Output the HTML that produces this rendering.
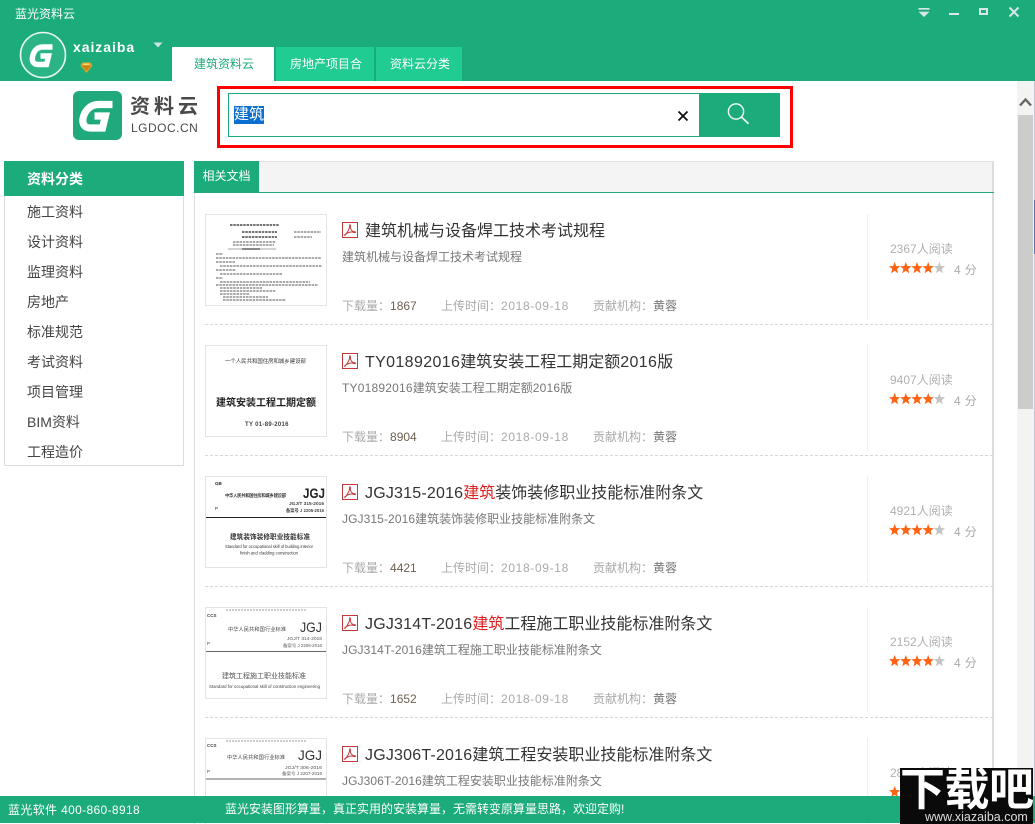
<!DOCTYPE html>
<html lang="zh-CN">
<head>
<meta charset="utf-8">
<title>蓝光资料云</title>
<style>
html,body{margin:0;padding:0;background:#fff;width:1035px;height:824px;overflow:hidden}
#wrap{left:0;top:0;width:1035px;height:824px;overflow:hidden;font-family:"Liberation Sans","Noto Sans CJK SC",sans-serif;color:#333;background:#fff}
div,svg{position:absolute;display:block}
.t{white-space:nowrap}
svg text{font-family:"Liberation Sans","Noto Sans CJK SC",sans-serif}
.tab{top:47px;height:34px;line-height:34px;text-align:center;text-indent:2px;font-size:12px;background:#21cc93;color:#fff}
.side{left:27px;font-size:14px;line-height:20px;color:#444;white-space:nowrap}
.row{left:205px;width:789px;height:111px}
.thumb{left:0;top:0;width:120px;height:90px;border:1px solid #e4e4e4;background:#fff;overflow:hidden}
.thumb svg{filter:blur(.35px)}
.pdf{left:137px;top:8px}
.title{left:160px;top:7px;font-size:16px;line-height:22px;color:#333;white-space:nowrap}
.title b{font-weight:normal;color:#e02020}
.title i{font-style:normal;letter-spacing:.2px}
.title i.w{letter-spacing:.36px}
.sub{left:137px;top:34px;font-size:12px;line-height:18px;color:#777;white-space:nowrap}
.sub i{font-style:normal;letter-spacing:.1px}
.sub i.w{letter-spacing:.2px}
.m{top:83px;font-size:12px;line-height:18px;color:#aaa;white-space:nowrap}
.m b{font-weight:normal}
.num{color:#6d6050}
.date{color:#aaa;letter-spacing:.65px}
.org{color:#777}
.vl{left:662px;top:0;width:1px;height:106px;background:#f0f0f0}
.dash{left:0;top:110px;width:788px;height:0;border-top:1px dashed #d8d8d8}
.read{left:685px;top:26px;font-size:12px;line-height:18px;color:#b0b0b0;white-space:nowrap}
.star{left:684px;top:48px}
.score{left:749px;top:47px;font-size:12px;line-height:18px;color:#aaa;letter-spacing:.4px;white-space:nowrap}
</style>
</head>
<body>
<div id="wrap">
<svg width="0" height="0" style="left:0;top:0">
<defs>
<polygon id="s" points="5.6,0 7.1,4 11.2,4.3 8,7 9.1,11.2 5.6,8.9 2.1,11.2 3.2,7 0,4.3 4.1,4"/>
<g id="st"><use href="#s" fill="#ff6414"/><use href="#s" x="11.2" fill="#ff6414"/><use href="#s" x="22.4" fill="#ff6414"/><use href="#s" x="33.6" fill="#ff6414"/><use href="#s" x="44.8" fill="#c4c4c4"/></g>
<g id="pd"><rect x=".5" y=".5" width="15" height="15" fill="#fff" stroke="#c0393b"/><path d="M2.5 13.2C4.5 12 6.6 8.6 7.4 5.8 7.8 4.4 7.6 2.8 7.9 2.6 8.4 2.6 8.6 4.2 8.3 5.6 8.8 7.6 10 9 11.4 9.6 12.4 9.6 13.6 9.7 13.5 10.3 13.3 10.9 11.5 10.5 10.4 9.9 8.5 9.9 6.4 10.4 4.6 11.4 3.8 12.4 3 13.6 2.5 13.2Z" fill="none" stroke="#c0393b" stroke-width="1"/></g>
</defs>
</svg>

<div style="left:0;top:0;width:1035px;height:81px;background:#1cab7b"></div>
<div class="t" style="left:15px;top:5px;font-size:12px;line-height:18px;color:#fff">蓝光资料云</div>

<svg style="left:918px;top:7px" width="12" height="11"><path d="M.5 1H11.5V2.6H.5ZM.5 4.8H11.5L6 10Z" fill="#dbe6ea"/></svg>
<div style="left:949px;top:13px;width:10px;height:2px;background:#dbe6ea"></div>
<div style="left:979px;top:8px;width:5px;height:3px;border:2px solid #dbe6ea"></div>
<svg style="left:1008px;top:6px" width="12" height="12"><path d="M1.5 1.5L10.5 10.5M10.5 1.5L1.5 10.5" stroke="#dbe6ea" stroke-width="2"/></svg>

<svg style="left:19px;top:31px" width="48" height="48">
<circle cx="24" cy="24" r="22.5" fill="#2bb587" stroke="#e6f6f0" stroke-width="1.6"/>
<path d="M33.5 16H23.5C17.5 16 14.2 21 13.4 26.5 12.8 31 15 33.5 19 33.5H27.5L29.6 25H21.5" fill="none" stroke="#fff" stroke-width="5.4"/>
</svg>
<div class="t" style="left:73px;top:37px;font-size:14px;line-height:20px;font-weight:bold;color:#fff;letter-spacing:.95px">xaizaiba</div>
<svg style="left:153px;top:42px" width="10" height="6"><path d="M0.5 .5H9.5L5 5.5Z" fill="#cfe3e6"/></svg>
<svg style="left:80px;top:62px" width="13" height="12"><path d="M2.5 .5H10.5L12.5 3.5 6.5 11 .5 3.5Z" fill="#e0a526"/><path d="M1.5 3.5H11.5L6.5 9Z" fill="#c9821c"/><path d="M3.5 1.5H9L9.5 3H3Z" fill="#f6d774"/></svg>

<div class="tab" style="left:172px;width:102px;background:#fff;color:#1fa97b">建筑资料云</div>
<div class="tab" style="left:276px;width:98px">房地产项目合</div>
<div class="tab" style="left:376px;width:86px">资料云分类</div>

<svg style="left:73px;top:91px" width="49" height="49">
<rect width="49" height="49" rx="6" fill="#1fa97c"/>
<path d="M39.5 13.5H25.5C17 13.5 11.5 20 10 27.5 9 33.5 12 37 17.5 37H29.5L32.4 25H21.5" fill="none" stroke="#fff" stroke-width="7.2"/>
</svg>
<div class="t" style="left:130px;top:93px;font-size:20px;line-height:28px;font-weight:bold;color:#4a4a4a;letter-spacing:4px">资料云</div>
<div class="t" style="left:131px;top:120px;font-size:12px;line-height:16px;color:#4a4a4a;letter-spacing:.5px">LGDOC.CN</div>

<div style="left:217px;top:86px;width:570px;height:56px;border:3px solid #f00"></div>
<div style="left:228px;top:93px;width:470px;height:42px;border:1px solid #1cab7b;border-right:0"></div>
<div class="t" style="left:234px;top:106px;width:30px;height:18px;background:#0a6fd1;color:#fff;font-size:15px;line-height:17px">建筑</div>
<svg style="left:677px;top:110px" width="12" height="12"><path d="M1.5 1.5L10.5 10.5M10.5 1.5L1.5 10.5" stroke="#111" stroke-width="1.8"/></svg>
<div style="left:699px;top:93px;width:81px;height:44px;background:#1cab7b"></div>
<svg style="left:726px;top:102px" width="26" height="24"><circle cx="10" cy="9.5" r="7.6" fill="none" stroke="#e8f7f2" stroke-width="1.5"/><path d="M15.4 15L22.6 21.8" stroke="#e8f7f2" stroke-width="1.7"/></svg>

<div style="left:4px;top:196px;width:178px;height:269px;border:1px solid #ddd;border-top:0"></div>
<div class="t" style="left:4px;top:161px;width:180px;height:35px;background:#1cab7b;color:#fff;font-size:14px;font-weight:bold;line-height:36px;text-indent:23px">资料分类</div>
<div class="side" style="top:202px">施工资料</div>
<div class="side" style="top:232px">设计资料</div>
<div class="side" style="top:262px">监理资料</div>
<div class="side" style="top:292px">房地产</div>
<div class="side" style="top:322px">标准规范</div>
<div class="side" style="top:352px">考试资料</div>
<div class="side" style="top:382px">项目管理</div>
<div class="side" style="top:412px">BIM资料</div>
<div class="side" style="top:442px">工程造价</div>

<div style="left:194px;top:161px;width:797px;height:663px;border-left:1px solid #ddd;border-right:2px solid #ddd"></div>
<div style="left:194px;top:161px;width:798px;height:31px;background:#f4f4f4;border-top:1px solid #e0e0e0;box-sizing:border-box"></div>
<div style="left:194px;top:192px;width:800px;height:1px;background:#1cab7b"></div>
<div class="t" style="left:194px;top:161px;width:65px;height:32px;background:#1cab7b;color:#fff;font-size:12px;line-height:31px;text-align:center">相关文档</div>

<div class="row" style="top:214px">
<div class="thumb"><svg width="120" height="90" style="left:0;top:0">
<g fill="none" stroke="#555" stroke-width=".9" stroke-dasharray="2.5 .8">
<path d="M24 10H73" stroke="#222" stroke-width="1.2"/>
<path d="M36 17H71M36 22H71" stroke="#222" stroke-width="1.2"/>
<path d="M88 17H115M88 22H106"/>
<path d="M27 27H70M27 30H68"/>
<path d="M10 39H17M10 43H115M10 47H29M14 51H116M10 55H30M14 59H76M10 63H17"/>
<path d="M14 67H104M10 70H112M14 73H56M14 76H70M14 79H44M17 82H62M17 85H80"/>
</g>
<path d="M22 34H70" stroke="#888" stroke-width=".8"/><path d="M36 34H54" stroke="#111" stroke-width="1"/>
</svg></div>
<svg class="pdf" width="16" height="16"><use href="#pd"/></svg>
<div class="title">建筑机械与设备焊工技术考试规程</div>
<div class="sub">建筑机械与设备焊工技术考试规程</div>
<div class="m" style="left:137px">下载量：<b class="num">1867</b></div>
<div class="m" style="left:236px">上传时间：<b class="date">2018-09-18</b></div>
<div class="m" style="left:388px">贡献机构：<b class="org">黄蓉</b></div>
<div class="vl"></div><div class="dash"></div>
<div class="read">2367人阅读</div>
<svg class="star" width="57" height="12"><use href="#st"/></svg>
<div class="score">4 分</div>
</div>

<div class="row" style="top:345px">
<div class="thumb"><svg width="120" height="90" style="left:0;top:0">
<text x="19" y="17" font-size="5.4" fill="#333">一个人民共和国住房和城乡建设部</text>
<text x="10" y="60" font-size="10" font-weight="bold" fill="#222">建筑安装工程工期定额</text>
<text x="39" y="80" font-size="6" font-weight="bold" letter-spacing=".3" fill="#444">TY 01-89-2016</text>
</svg></div>
<svg class="pdf" width="16" height="16"><use href="#pd"/></svg>
<div class="title"><i class="w">TY01892016</i>建筑安装工程工期定额<i class="w">2016</i>版</div>
<div class="sub"><i class="w">TY01892016</i>建筑安装工程工期定额<i class="w">2016</i>版</div>
<div class="m" style="left:137px">下载量：<b class="num">8904</b></div>
<div class="m" style="left:236px">上传时间：<b class="date">2018-09-18</b></div>
<div class="m" style="left:388px">贡献机构：<b class="org">黄蓉</b></div>
<div class="vl"></div><div class="dash"></div>
<div class="read">9407人阅读</div>
<svg class="star" width="57" height="12"><use href="#st"/></svg>
<div class="score">4 分</div>
</div>

<div class="row" style="top:476px">
<div class="thumb"><svg width="120" height="90" style="left:0;top:0">
<text x="9" y="8" font-size="4.5" font-weight="bold" fill="#222">GB</text>
<text x="19" y="20" font-size="4.3" font-weight="bold" fill="#333" textLength="61">中华人民共和国住房和城乡建设部</text>
<text x="97" y="21" font-size="14" font-weight="bold" fill="#222" textLength="22" lengthAdjust="spacingAndGlyphs">JGJ</text>
<text x="83" y="28" font-size="4.5" font-weight="bold" fill="#444" textLength="35" lengthAdjust="spacingAndGlyphs">JGJ/T 315-2016</text>
<text x="80" y="35" font-size="4.3" font-weight="bold" fill="#444" textLength="38" lengthAdjust="spacingAndGlyphs">备案号 J 2205-2016</text>
<text x="9" y="33" font-size="4.5" fill="#222">P</text>
<path d="M0 40.5H120" stroke="#222" stroke-width="1"/>
<text x="24" y="62" font-size="6.6" font-weight="bold" fill="#333" textLength="80">建筑装饰装修职业技能标准</text>
<text x="19" y="71" font-size="4.5" fill="#333" textLength="88" lengthAdjust="spacingAndGlyphs">Standard for occupational skill of building interior</text>
<text x="34" y="77.5" font-size="4.5" fill="#333" textLength="58" lengthAdjust="spacingAndGlyphs">finish and cladding construction</text>
</svg></div>
<svg class="pdf" width="16" height="16"><use href="#pd"/></svg>
<div class="title"><i>JGJ315-2016</i><b>建筑</b>装饰装修职业技能标准附条文</div>
<div class="sub"><i>JGJ315-2016</i>建筑装饰装修职业技能标准附条文</div>
<div class="m" style="left:137px">下载量：<b class="num">4421</b></div>
<div class="m" style="left:236px">上传时间：<b class="date">2018-09-18</b></div>
<div class="m" style="left:388px">贡献机构：<b class="org">黄蓉</b></div>
<div class="vl"></div><div class="dash"></div>
<div class="read">4921人阅读</div>
<svg class="star" width="57" height="12"><use href="#st"/></svg>
<div class="score">4 分</div>
</div>

<div class="row" style="top:607px">
<div class="thumb"><svg width="120" height="90" style="left:0;top:0">
<path d="M20 2H100" stroke="#999" stroke-width="1" stroke-dasharray="2 1"/>
<text x="1" y="9" font-size="4.5" font-weight="bold" fill="#444">CCS</text>
<text x="22" y="23" font-size="5.2" fill="#444" textLength="58">中华人民共和国行业标准</text>
<text x="94" y="24" font-size="14" fill="#333" textLength="22" lengthAdjust="spacingAndGlyphs">JGJ</text>
<text x="81" y="32" font-size="4.2" fill="#555" textLength="35" lengthAdjust="spacingAndGlyphs">JGJ/T 314-2016</text>
<text x="77" y="39" font-size="4.2" fill="#555" textLength="39" lengthAdjust="spacingAndGlyphs">备案号 J 2206-2016</text>
<text x="1" y="37" font-size="4.5" fill="#444">P</text>
<path d="M0 43.5H120" stroke="#666" stroke-width="1"/>
<text x="16" y="70" font-size="7" fill="#555" textLength="84">建筑工程施工职业技能标准</text>
<text x="3" y="80" font-size="4.2" fill="#444" textLength="111" lengthAdjust="spacingAndGlyphs">Standard for occupational skill of construction engineering</text>
</svg></div>
<svg class="pdf" width="16" height="16"><use href="#pd"/></svg>
<div class="title"><i>JGJ314T-2016</i><b>建筑</b>工程施工职业技能标准附条文</div>
<div class="sub"><i>JGJ314T-2016</i>建筑工程施工职业技能标准附条文</div>
<div class="m" style="left:137px">下载量：<b class="num">1652</b></div>
<div class="m" style="left:236px">上传时间：<b class="date">2018-09-18</b></div>
<div class="m" style="left:388px">贡献机构：<b class="org">黄蓉</b></div>
<div class="vl"></div><div class="dash"></div>
<div class="read">2152人阅读</div>
<svg class="star" width="57" height="12"><use href="#st"/></svg>
<div class="score">4 分</div>
</div>

<div class="row" style="top:738px">
<div class="thumb"><svg width="120" height="90" style="left:0;top:0">
<path d="M20 2H100" stroke="#999" stroke-width="1" stroke-dasharray="2 1"/>
<text x="1" y="8" font-size="4.5" font-weight="bold" fill="#444">CCS</text>
<text x="21" y="20" font-size="5.2" fill="#444" textLength="58">中华人民共和国行业标准</text>
<text x="92" y="21" font-size="14" fill="#333" textLength="24" lengthAdjust="spacingAndGlyphs">JGJ</text>
<text x="79" y="30" font-size="4.2" fill="#555" textLength="37" lengthAdjust="spacingAndGlyphs">JGJ/T 306-2016</text>
<text x="76" y="36" font-size="4.2" fill="#555" textLength="40" lengthAdjust="spacingAndGlyphs">备案号 J 2207-2016</text>
<text x="1" y="34" font-size="4.5" fill="#444">P</text>
<path d="M0 40H120" stroke="#666" stroke-width="1"/>
</svg></div>
<svg class="pdf" width="16" height="16"><use href="#pd"/></svg>
<div class="title"><i>JGJ306T-2016</i>建筑工程安装职业技能标准附条文</div>
<div class="sub"><i>JGJ306T-2016</i>建筑工程安装职业技能标准附条文</div>
<div class="vl"></div>
<div class="read">2890人阅读</div>
<svg class="star" width="57" height="12"><use href="#st"/></svg>
</div>

<div style="left:1017px;top:81px;width:17px;height:743px;background:#f3f3f3"></div>
<svg style="left:1019px;top:97px" width="13" height="10"><path d="M1 8.5L6.5 2.5 12 8.5" fill="none" stroke="#666" stroke-width="2.4"/></svg>
<div style="left:1018px;top:115px;width:15px;height:294px;background:#ccc"></div>
<div style="left:1034px;top:81px;width:1px;height:743px;background:#c9c9d2"></div>
<div style="left:1034px;top:200px;width:1px;height:54px;background:#5f74ad"></div>

<div style="left:0;top:796px;width:1035px;height:27px;background:#1cab7b"></div>
<div class="t" style="left:8px;top:801px;font-size:12px;line-height:18px;color:#fff;letter-spacing:.35px">蓝光软件 400-860-8918</div>
<div class="t" style="left:225px;top:800px;font-size:12px;line-height:18px;color:#fff">蓝光安装图形算量，真正实用的安装算量，无需转变原算量思路，欢迎定购!</div>

<div style="left:900px;top:768px;width:133px;height:56px;background:#0a0a0a;overflow:hidden">
<div class="t" style="left:0;top:-6px;font-size:45px;line-height:56px;font-weight:bold;color:#fff;letter-spacing:-.5px">下载吧</div>
<div class="t" style="left:25px;top:42px;font-size:12.5px;line-height:14px;color:#ddd">www.xiazaiba.com</div>
</div>
</div>
</body>
</html>
